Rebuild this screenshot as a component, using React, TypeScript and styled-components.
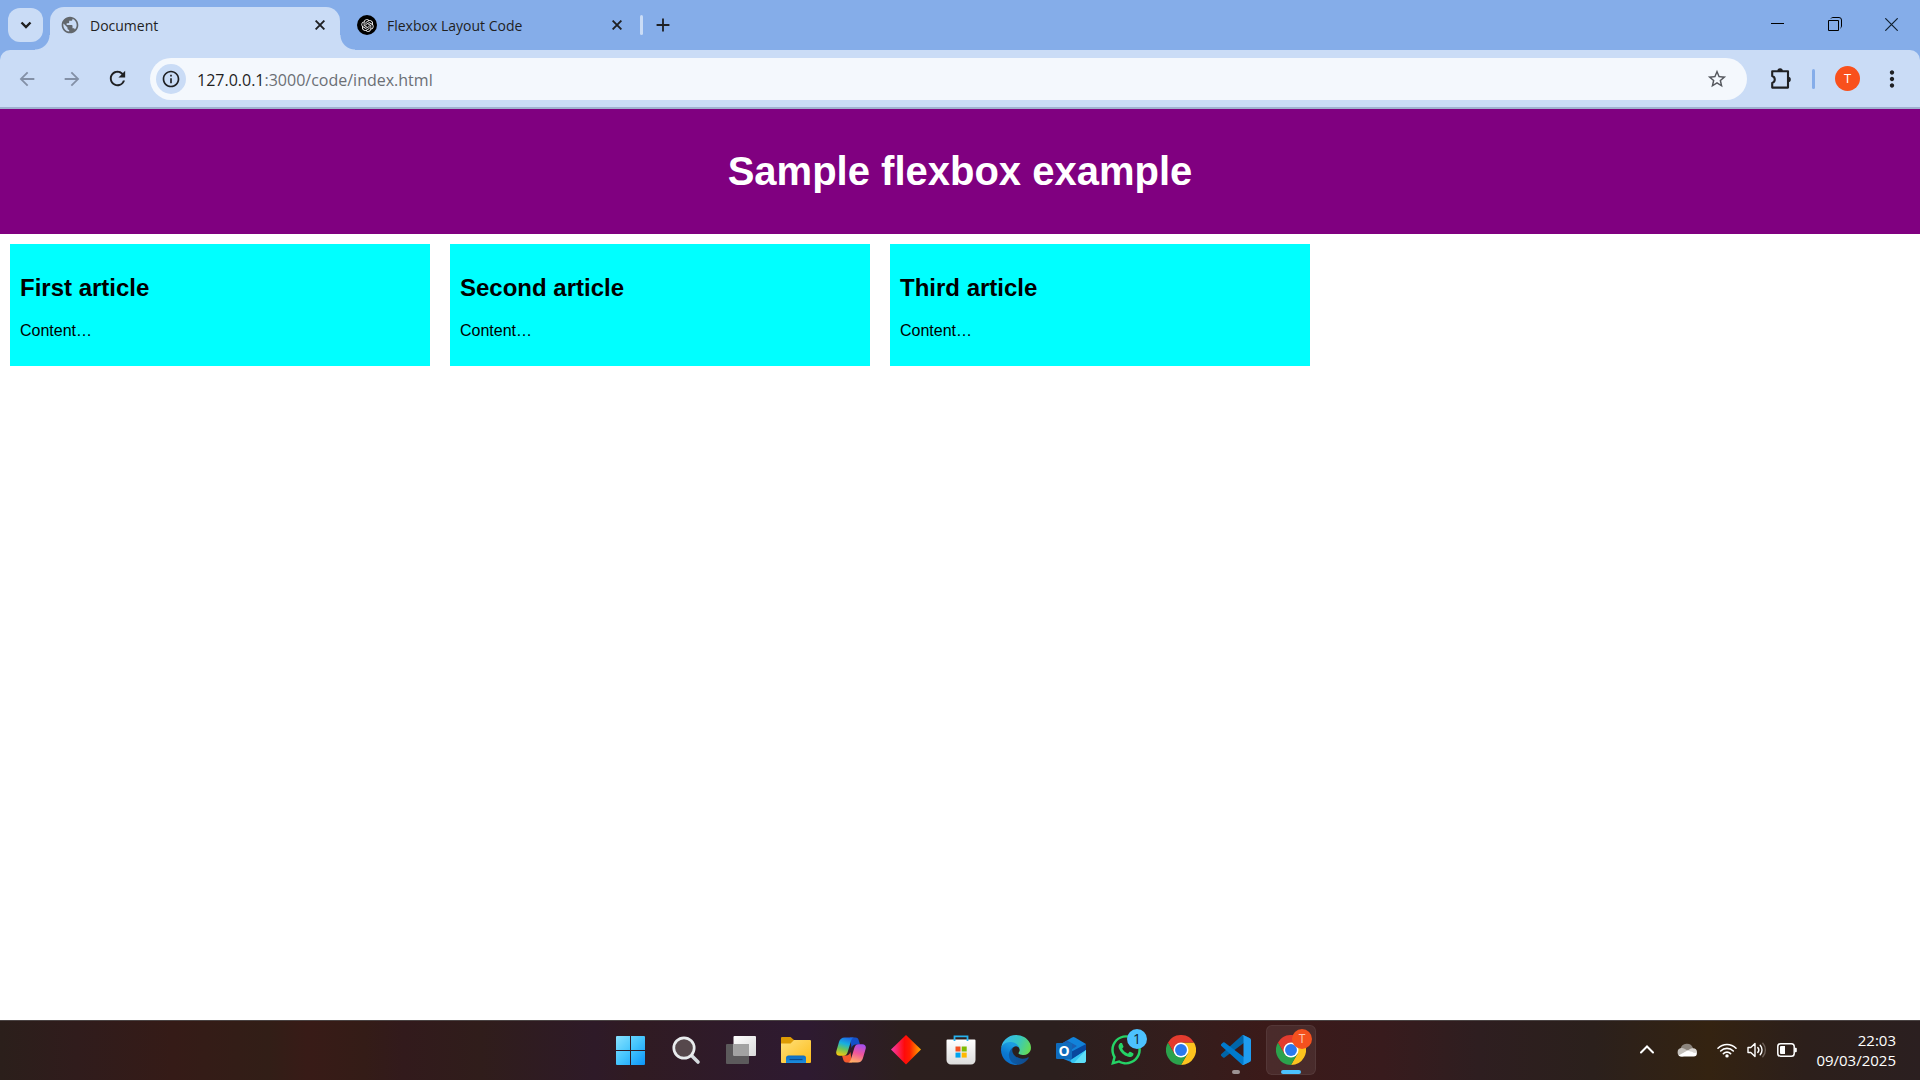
import React from "react";
import styled, { createGlobalStyle, css } from "styled-components";
import { MdArrowBack, MdArrowForward, MdRefresh, MdPublic, MdStarBorder, MdMoreVert, MdInfoOutline, MdAdd } from "react-icons/md";
import { FaWhatsapp } from "react-icons/fa";
import { RiOpenaiFill } from "react-icons/ri";

const UI_FONT = '"Open Sans", "Noto Sans", sans-serif';

const GlobalStyle = createGlobalStyle`
  *, *::before, *::after { box-sizing: border-box; }
  body { margin: 0; background: #fff; font-family: "Liberation Sans", Arial, sans-serif; }
  button, input { font: inherit; color: inherit; border: 0; padding: 0; margin: 0; background: none; }
  svg { display: block; flex: none; }
`;

const Screen = styled.div`
  min-height: 100vh;
  display: flex;
  flex-direction: column;
`;

/* ---------- browser chrome ---------- */

const Browser = styled.header`
  background: #85ade9;
  font-family: ${UI_FONT};
  color: #1f1f1f;
`;

const TabStrip = styled.div`
  display: flex;
  align-items: stretch;
  height: 50px;
  padding-left: 8px;
`;

const TabSearch = styled.button`
  align-self: center;
  display: grid;
  place-items: center;
  width: 35px;
  height: 34px;
  margin-right: 7px;
  border-radius: 12px;
  background: #cadcf6;
`;

const Tab = styled.div<{ $active?: boolean }>`
  position: relative;
  display: flex;
  align-items: center;
  width: ${(p) => (p.$active ? 290 : 300)}px;
  margin-top: 7px;
  padding: ${(p) => (p.$active ? "0 10px 7px" : "0 13px 7px 17px")};
  border-radius: 14px 14px 0 0;
  ${(p) =>
    p.$active &&
    css`
      background: #cadcf6;
      &::before,
      &::after {
        content: "";
        position: absolute;
        bottom: 0;
        width: 15px;
        height: 15px;
      }
      &::before {
        right: 100%;
        background: radial-gradient(circle at 0 0, transparent 14px, #cadcf6 15px);
      }
      &::after {
        left: 100%;
        background: radial-gradient(circle at 100% 0, transparent 14px, #cadcf6 15px);
      }
    `}
`;

const Favicon = styled.span<{ $dark?: boolean }>`
  display: grid;
  place-items: center;
  width: 20px;
  height: 20px;
  border-radius: 50%;
  color: ${(p) => (p.$dark ? "#fff" : "#62676c")};
  background: ${(p) => (p.$dark ? "#000" : "transparent")};
`;

const TabTitle = styled.span`
  flex: 1;
  margin-left: 10px;
  padding-top: 2px;
  font-size: 14px;
  line-height: 20px;
  white-space: nowrap;
`;

const IconButton = styled.button<{ $size?: number; $muted?: boolean }>`
  display: grid;
  place-items: center;
  width: ${(p) => p.$size ?? 20}px;
  height: ${(p) => p.$size ?? 20}px;
  color: ${(p) => (p.$muted ? "#8390a6" : "#1f2023")};
`;

const Divider = styled.span<{ $color: string }>`
  align-self: center;
  width: 3px;
  height: 20px;
  border-radius: 2px;
  background: ${(p) => p.$color};
`;

const NewTab = styled(IconButton)`
  align-self: center;
  margin-left: 5px;
`;

const WindowControls = styled.div`
  display: flex;
  margin-left: auto;
`;

const WindowButton = styled.button`
  display: grid;
  place-items: center;
  width: 57px;
  height: 48px;
`;

const Toolbar = styled.div`
  display: flex;
  align-items: center;
  height: 59px;
  padding: 0 13px 0 9px;
  border-bottom: 2px solid #9fb1cf;
  border-radius: 10px 10px 0 0;
  background: #cadcf6;
`;

const NavButtons = styled.nav`
  display: flex;
  gap: 9px;
  margin-right: 15px;
`;

const Omnibox = styled.div`
  display: flex;
  flex: 1;
  align-items: center;
  height: 42px;
  padding: 0 12px 0 6px;
  border-radius: 21px;
  background: #f4f8fd;
  font-size: 16px;
  line-height: 24px;
`;

const SiteInfo = styled(IconButton)`
  margin-right: 11px;
  border-radius: 50%;
  background: #cadcf6;
`;

const UrlHost = styled.label`
  padding-top: 2px;
`;

const UrlPath = styled.input`
  flex: 1;
  min-width: 0;
  height: 26px;
  padding-top: 2px;
  color: #6b6f75;
  outline: 0;
`;

const ToolbarEnd = styled.div`
  display: flex;
  align-items: center;
  gap: 13px;
  padding-left: 16px;
`;

const Avatar = styled.button`
  width: 25px;
  height: 25px;
  margin: 0 4px 0 7px;
  border-radius: 50%;
  background: #f9501c;
  color: #fff;
  font-size: 13px;
  line-height: 25px;
  text-align: center;
`;

/* ---------- page ---------- */

const Page = styled.main`
  flex: 1;
`;

const Banner = styled.div`
  padding: 40px 10px;
  background: purple;
  color: #fff;
  text-align: center;
`;

const Title = styled.h1`
  margin: 0;
  font-size: 40px;
  line-height: 45px;
`;

const Articles = styled.section`
  display: flex;
  flex-wrap: wrap;
  gap: 20px;
  padding: 10px;
`;

const Article = styled.article`
  width: 420px;
  padding: 30px 10px 26px;
  background: aqua;
`;

const Heading = styled.h2`
  margin: 0 0 20px;
  font-size: 24px;
  line-height: 28px;
`;

const Copy = styled.p`
  margin: 0;
  font-size: 16px;
  line-height: 18px;
`;

/* ---------- taskbar ---------- */

const Taskbar = styled.footer`
  display: grid;
  grid-template-columns: 1fr auto 1fr;
  align-items: center;
  height: 60px;
  padding: 0 0 2px 2px;
  border-top: 1px solid #4a4343;
  background: linear-gradient(
    90deg,
    #2b1f1b 0%, #301c1c 4%, #351b17 9%, #321e17 14%, #381b17 16%, #341c17 19%,
    #321a1c 21%, #301d1b 25%, #2e1a28 31%, #301b22 33%, #2e1a31 42%, #2c1f1e 47%,
    #2b1f1e 55%, #351d1c 62%, #3b1a19 66%, #381b1d 72%, #2e1e20 77%, #2b201c 83%,
    #342311 89%, #2c1f1b 94%, #2b1f20 100%
  );
  color: #fff;
  font-family: ${UI_FONT};
`;

const Apps = styled.nav`
  grid-column: 2;
  display: flex;
  gap: 5px;
`;

const AppButton = styled.button<{ $active?: boolean }>`
  position: relative;
  display: grid;
  place-items: center;
  width: 50px;
  height: 50px;
  border-radius: 6px;
  ${(p) =>
    p.$active &&
    css`
      background: rgba(255, 255, 255, 0.08);
      box-shadow: inset 0 0 0 1px rgba(255, 255, 255, 0.06);
    `}
`;

const Running = styled.span<{ $focused?: boolean }>`
  position: absolute;
  bottom: 1px;
  left: 50%;
  width: ${(p) => (p.$focused ? 20 : 8)}px;
  height: 4px;
  border-radius: 2px;
  background: ${(p) => (p.$focused ? "#4cc2ff" : "#9d9393")};
  transform: translateX(-50%);
`;

const Badge = styled.span<{ $profile?: boolean }>`
  position: absolute;
  top: 4px;
  right: 4px;
  width: 20px;
  height: 20px;
  border-radius: 50%;
  background: ${(p) => (p.$profile ? "#f4511e" : "#4cc2ff")};
  color: ${(p) => (p.$profile ? "#ffc9b5" : "#10242f")};
  font-size: ${(p) => (p.$profile ? 12 : 14)}px;
  line-height: 20px;
  text-align: center;
`;

const Tray = styled.div`
  grid-column: 3;
  justify-self: end;
  display: flex;
  align-items: center;
  padding-right: 24px;
`;

const TrayButton = styled.button`
  display: grid;
  place-items: center;
  width: 40px;
  height: 40px;
`;

const Status = styled.button`
  display: flex;
  align-items: center;
  gap: 10px;
  height: 40px;
  margin: 0 19px 0 10px;
`;

const Clock = styled.time`
  display: grid;
  font-size: 15px;
  line-height: 20px;
  text-align: right;
`;

/* ---------- drawings ---------- */

const CloseIcon = () => (
  <svg width="10" height="10" viewBox="0 0 10 10" stroke="#1f2023" strokeWidth="1.900">
    <path d="M.6.600l8.800 8.800M9.400.6L.6 9.400" />
  </svg>
);

const Puzzle = () => (
  <svg width="22" height="22" viewBox="0 0 22 22" fill="none" stroke="#1f2023" strokeWidth="2.100" strokeLinejoin="round">
    <path d="M2.200 3.200H18v16.400H2.200v-4.700a3.600 3.600 0 0 0 0-6.900z" />
    <path d="M7.400 3a2.700 2.700 0 0 1 5.400 0zM18.200 8.800a2.600 2.600 0 0 1 0 5.200z" fill="#1f2023" stroke="none" />
  </svg>
);

const Windows = () => (
  <svg width="30" height="30" viewBox="0 0 30 30">
    <defs>
      <linearGradient id="win" gradientUnits="userSpaceOnUse" x1="0" y1="0" x2="30" y2="30">
        <stop offset="0" stopColor="#8be3ff" />
        <stop offset=".5" stopColor="#44c5fd" />
        <stop offset="1" stopColor="#0a94f8" />
      </linearGradient>
    </defs>
    <path fill="url(#win)" d="M1 1h13v14H0V2a1 1 0 0 1 1-1zM15 1h13a1 1 0 0 1 1 1v13H15zM0 16h14v14H1a1 1 0 0 1-1-1zM15 16h14v13a1 1 0 0 1-1 1H15z" />
  </svg>
);

const Search = () => (
  <svg width="30" height="30" viewBox="0 0 30 30" fill="none">
    <path d="M20.500 20.500l6.500 6.500" stroke="#d5dade" strokeWidth="3.600" strokeLinecap="round" />
    <circle cx="13" cy="13" r="10.200" fill="#56484c" stroke="#e9ecee" strokeWidth="2.700" />
  </svg>
);

const TaskView = () => (
  <svg width="30" height="30" viewBox="0 0 30 30">
    <defs>
      <linearGradient id="tv" x1="0" y1="0" x2="1" y2="1">
        <stop offset="0" stopColor="#fff" />
        <stop offset="1" stopColor="#d9d9d9" />
      </linearGradient>
    </defs>
    <rect x="0" y="9" width="23" height="20" rx="1" fill="#5c5a5c" />
    <rect x="7.500" y="1" width="22.500" height="20" rx="1" fill="url(#tv)" />
    <path d="M7.500 9H23v12H8.500a1 1 0 0 1-1-1z" fill="#a2a2a2" />
  </svg>
);

const Folder = () => (
  <svg width="30" height="30" viewBox="0 0 30 30">
    <defs>
      <linearGradient id="fo" x1="0" y1="0" x2="1" y2="1">
        <stop offset="0" stopColor="#ffe07a" />
        <stop offset="1" stopColor="#fcbc19" />
      </linearGradient>
      <linearGradient id="fb" x1="0" y1="0" x2="0" y2="1">
        <stop offset="0" stopColor="#0f6cc0" />
        <stop offset="1" stopColor="#1a8de0" />
      </linearGradient>
    </defs>
    <path d="M0 3a1 1 0 0 1 1-1h8.500l3.500 3v6H0z" fill="#dd9b05" />
    <path d="M0 8.500h9.500L13 5h16a1 1 0 0 1 1 1v21a1 1 0 0 1-1 1H1a1 1 0 0 1-1-1z" fill="url(#fo)" />
    <path d="M5 28v-5a2.500 2.500 0 0 1 2.500-2.500h15A2.500 2.500 0 0 1 25 23v5z" fill="url(#fb)" />
    <path d="M8.500 24.500h13" stroke="#0a4a8c" strokeWidth="1.200" />
  </svg>
);

const Copilot = () => (
  <svg width="30" height="30" viewBox="0 0 30 30">
    <defs>
      <linearGradient id="co1" x1=".6" y1="0" x2=".3" y2="1">
        <stop offset="0" stopColor="#1d6be8" />
        <stop offset=".35" stopColor="#17b0e0" />
        <stop offset=".65" stopColor="#6cc45a" />
        <stop offset="1" stopColor="#f5c80e" />
      </linearGradient>
      <linearGradient id="co2" x1=".7" y1="0" x2=".4" y2="1">
        <stop offset="0" stopColor="#a44ff0" />
        <stop offset=".5" stopColor="#f0569a" />
        <stop offset="1" stopColor="#ffb066" />
      </linearGradient>
    </defs>
    <path d="M14 2.500h5.500c2 0 2.800 1.200 3.400 3.200L24 9.500h-4c-2.500 0-3.700 1.300-4.400 3.500z" fill="#1450c8" />
    <path d="M16 27.500h-5.500c-2 0-2.800-1.200-3.400-3.200L6 20.500h4c2.500 0 3.700-1.300 4.400-3.500z" fill="#f4592e" />
    <path d="M8.500 2.500h10c-2 0-2.900 1.600-3.500 3.600l-3.300 11c-.7 2.300-1.900 3.700-4.200 3.700H3.600C.8 20.800-.4 18.700.4 15.900L3 7c.9-3 2.800-4.500 5.500-4.500z" fill="url(#co1)" />
    <path d="M21.500 27.500h-10c2 0 2.900-1.600 3.500-3.600l3.300-11c.7-2.300 1.900-3.700 4.200-3.700h3.900c2.800 0 4 2.100 3.200 4.900L27 23c-.9 3-2.800 4.500-5.500 4.500z" fill="url(#co2)" />
  </svg>
);

const Diamond = () => (
  <svg width="30" height="30" viewBox="0 0 30 30">
    <defs>
      <linearGradient id="di">
        <stop offset="0" stopColor="#f43cb0" />
        <stop offset=".45" stopColor="#ff0a0a" />
        <stop offset=".62" stopColor="#ff1d00" />
        <stop offset="1" stopColor="#ffae00" />
      </linearGradient>
    </defs>
    <path d="M15 0l15 14.500L15 29.500 0 14.500z" fill="url(#di)" />
  </svg>
);

const Store = () => (
  <svg width="30" height="30" viewBox="0 0 30 30">
    <defs>
      <linearGradient id="st" x1="0" y1="0" x2="0" y2="1">
        <stop offset="0" stopColor="#fff" />
        <stop offset="1" stopColor="#dcdcdc" />
      </linearGradient>
    </defs>
    <path d="M.5 5.500A1 1 0 0 1 1.500 4.500h27a1 1 0 0 1 1 1V25a4.500 4.500 0 0 1-4.500 4.500H5A4.500 4.500 0 0 1 .5 25z" fill="url(#st)" />
    <path d="M8.500 6V1.300h13V6" fill="none" stroke="#27b2ee" strokeWidth="1.800" />
    <path d="M9.500 11.500h5v5h-5z" fill="#f25022" />
    <path d="M15.700 11.500h5v5h-5z" fill="#7fba00" />
    <path d="M9.500 17.600h5v5h-5z" fill="#00a4ef" />
    <path d="M15.700 17.600h5v5h-5z" fill="#ffb900" />
  </svg>
);

const Edge = () => (
  <svg width="30" height="30" viewBox="0 0 256 256">
    <defs>
      <linearGradient id="ed1" x1=".25" y1=".7" x2="1" y2=".7">
        <stop offset="0" stopColor="#0c59a4" />
        <stop offset="1" stopColor="#114a8b" />
      </linearGradient>
      <linearGradient id="ed2" x1=".6" y1=".2" x2=".3" y2="1">
        <stop offset="0" stopColor="#1b9de2" />
        <stop offset=".5" stopColor="#0b78d0" />
        <stop offset="1" stopColor="#0a6cc8" />
      </linearGradient>
      <linearGradient id="ed3" x1="0" y1=".4" x2="1" y2=".7">
        <stop offset="0" stopColor="#35b8ef" />
        <stop offset=".5" stopColor="#36c7c4" />
        <stop offset="1" stopColor="#68dc4e" />
      </linearGradient>
    </defs>
    <path fill="url(#ed1)" d="M231 190.500c-3.400 1.800-6.900 3.400-10.500 4.700a101.900 101.900 0 0 1-35.900 6.500c-47.300 0-88.500-32.500-88.500-74.300 0-11.400 6.400-21.900 16.600-27.500-42.800 1.800-53.800 46.400-53.800 72.500 0 73.900 68.100 81.400 82.800 81.400 7.900 0 19.800-2.300 27-4.600l1.300-.4a128.300 128.300 0 0 0 66.600-52.800 4 4 0 0 0-5.600-5.500z" />
    <path fill="url(#ed2)" d="M105.700 241.400A79.200 79.200 0 0 1 83 220.100a80.700 80.700 0 0 1 29.500-120.200c3.200-1.500 8.500-4.100 15.600-4a32.400 32.400 0 0 1 25.700 13 31.900 31.900 0 0 1 6.300 18.700c0-.2 24.500-79.600-80-79.600-43.900 0-80 41.700-80 78.200a130.200 130.200 0 0 0 12.100 56 128 128 0 0 0 156.400 67.100 75.500 75.500 0 0 1-62.800-8z" />
    <path fill="url(#ed3)" d="M152.300 148.900c-.9 1-3.400 2.500-3.400 5.600 0 2.600 1.700 5.200 4.800 7.300 14.300 10 41.400 8.600 41.500 8.600a59.600 59.600 0 0 0 30.300-8.300 61.400 61.400 0 0 0 30.400-52.900c.3-22.400-8-37.300-11.300-43.900C223.500 23.900 177.700 0 128 0A128 128 0 0 0 0 126.200c.5-36.500 36.800-66 80-66 3.500 0 23.500.3 42 10.100 16.300 8.600 24.900 18.900 30.800 29.200 6.200 10.700 7.300 24.100 7.300 29.500 0 5.300-2.700 13.300-7.800 19.900z" />
  </svg>
);

const OutlookMark = styled.span`
  position: absolute;
  left: 10px;
  top: 18px;
  width: 16px;
  height: 16px;
  border-radius: 1px;
  background: #0f6cbd;
  color: #fff;
  font-size: 14px;
  font-weight: 700;
  line-height: 15px;
  text-align: center;
`;

const Outlook = () => (
  <>
    <svg width="30" height="30" viewBox="0 0 30 30">
      <path d="M5 9L16 2.400a3 3 0 0 1 3 0L30 9v16a3 3 0 0 1-3 3H17a3 3 0 0 1-2-1L5 23z" fill="#1283da" />
      <path d="M5 9l6-3.600 10 5.600-13 8.500z" fill="#1a5fb4" />
      <path d="M30 9v6L15.500 25 11 22V19z" fill="#08479d" />
      <path d="M30 15v10a3 3 0 0 1-3 3H17.500a3 3 0 0 1-3-3z" fill="#35c5f2" />
      <path d="M30 15v10a3 3 0 0 1-3 3h-9z" fill="#5fdff8" />
    </svg>
    <OutlookMark>O</OutlookMark>
  </>
);

const Chrome = () => (
  <svg width="30" height="30" viewBox="0 0 48 48">
    <path d="M24 12h20.800A24 24 0 0 1 24 48l10.400-18z" fill="#fcc31e" />
    <path d="M13.600 30L3.200 12A24 24 0 0 0 24 48l10.400-18z" fill="#2ba24c" />
    <path d="M24 12h20.800A24 24 0 0 0 3.200 12l10.400 18z" fill="#e33b2e" />
    <circle cx="24" cy="24" r="12" fill="#fff" />
    <circle cx="24" cy="24" r="9.500" fill="#2a79ee" />
  </svg>
);

const VsCode = () => (
  <svg width="30" height="30" viewBox="0 0 100 100">
    <path d="M96.500 10.800L75.900.9a6.200 6.200 0 0 0-7.100 1.200L1.300 63.600a4.200 4.200 0 0 0 0 6.200l5.500 5a4.200 4.200 0 0 0 5.300.2l81.200-61.600c2.700-2.100 6.700-.1 6.700 3.300v-.2a6.200 6.200 0 0 0-3.500-5.700z" fill="#0065a9" />
    <path d="M96.500 89.200l-20.600 9.900a6.200 6.200 0 0 1-7.100-1.200L1.300 36.400a4.200 4.200 0 0 1 0-6.200l5.500-5a4.200 4.200 0 0 1 5.300-.2l81.200 61.600c2.700 2.100 6.700.1 6.700-3.300v.2a6.200 6.200 0 0 1-3.500 5.700z" fill="#007acc" />
    <path d="M75.900 99.100a6.200 6.200 0 0 1-7.100-1.200c2.300 2.300 6.200.7 6.200-2.600V4.700c0-3.300-3.900-4.900-6.200-2.600a6.200 6.200 0 0 1 7.100-1.200l20.600 9.900a6.300 6.300 0 0 1 3.500 5.700v67a6.300 6.300 0 0 1-3.500 5.600z" fill="#1f9cf0" />
  </svg>
);

const Cloud = () => (
  <svg width="20" height="14" viewBox="0 0 20 14">
    <path d="M3.500 6a6.500 6.500 0 0 1 12.500-1l1 4H4z" fill="#8b847c" />
    <path d="M4.200 13.500A4.300 4.300 0 0 1 4.300 5c2.200-.2 3.500.8 6.200 2.400L13 9l-7 4.500z" fill="#c4c0bb" />
    <path d="M10 8l3-2a4.200 4.200 0 0 1 3-.8 4.200 4.200 0 0 1 4 4.300v1z" fill="#d9d6d2" />
    <path d="M1.500 12.500L10.500 7.500l9.400 2.800a3.300 3.300 0 0 1-3.400 3.200H4.200a4 4 0 0 1-2.700-1z" fill="#fff" />
  </svg>
);

const Wifi = () => (
  <svg width="20" height="16" viewBox="0 0 20 16" fill="none" stroke="#fff" strokeWidth="1.600" strokeLinecap="round">
    <path d="M1 6.200a12.700 12.700 0 0 1 18 0M3.700 9a8.900 8.900 0 0 1 12.600 0M6.400 11.600a5.100 5.100 0 0 1 7.200 0" />
    <circle cx="10" cy="13.900" r="1.700" fill="#fff" stroke="none" />
  </svg>
);

const Speaker = () => (
  <svg width="20" height="16" viewBox="0 0 20 16" fill="none" stroke="#fff" strokeWidth="1.400" strokeLinecap="round" strokeLinejoin="round">
    <path d="M1 5.500h2.800L8 1.500v13l-4.200-4H1z" />
    <path d="M10.800 5.500a3.800 3.800 0 0 1 0 5M13.200 3.300a7 7 0 0 1 0 9.400" />
    <path d="M15.800 1.300a10 10 0 0 1 0 13.400" stroke="#6d6058" />
  </svg>
);

const Battery = () => (
  <svg width="20" height="14" viewBox="0 0 20 14" fill="none">
    <rect x=".8" y=".8" width="16.400" height="12.400" rx="2.800" stroke="#fff" strokeWidth="1.500" />
    <path d="M3 4a1 1 0 0 1 1-1h4v8H4a1 1 0 0 1-1-1z" fill="#fff" />
    <path d="M18 4.800h.8a1 1 0 0 1 1 1v2.400a1 1 0 0 1-1 1H18z" fill="#fff" />
  </svg>
);

const articles = ["First article", "Second article", "Third article"];

const apps = [
  { name: "Start", icon: <Windows /> },
  { name: "Search", icon: <Search /> },
  { name: "Task View", icon: <TaskView /> },
  { name: "File Explorer", icon: <Folder /> },
  { name: "Copilot", icon: <Copilot /> },
  { name: "Diamond", icon: <Diamond /> },
  { name: "Microsoft Store", icon: <Store /> },
  { name: "Edge", icon: <Edge /> },
  { name: "Outlook", icon: <Outlook /> },
  { name: "WhatsApp", icon: <FaWhatsapp size={34} color="#25d366" />, badge: "1" },
  { name: "Chrome", icon: <Chrome /> },
  { name: "Visual Studio Code", icon: <VsCode />, running: true },
  { name: "Chrome, profile T", icon: <Chrome />, badge: "T", running: true, active: true },
];

export default function App() {
  return (
    <Screen>
      <GlobalStyle />
      <Browser>
        <TabStrip>
          <TabSearch aria-label="Search tabs">
            <svg width="12" height="8" viewBox="0 0 12 8" fill="none" stroke="#1f1f1f" strokeWidth="2.400">
              <path d="M1.500 1.500L6 6l4.500-4.500" />
            </svg>
          </TabSearch>
          <Tab $active>
            <Favicon><MdPublic size={20} /></Favicon>
            <TabTitle>Document</TabTitle>
            <IconButton aria-label="Close Document"><CloseIcon /></IconButton>
          </Tab>
          <Tab>
            <Favicon $dark><RiOpenaiFill size={15} /></Favicon>
            <TabTitle>Flexbox Layout Code</TabTitle>
            <IconButton aria-label="Close Flexbox Layout Code"><CloseIcon /></IconButton>
          </Tab>
          <Divider $color="#cadcf6" />
          <NewTab $size={30} aria-label="New tab"><MdAdd size={22} /></NewTab>
          <WindowControls>
            <WindowButton aria-label="Minimize">
              <svg width="13" height="13" viewBox="0 0 13 13" stroke="#000"><path d="M0 5.500h13" /></svg>
            </WindowButton>
            <WindowButton aria-label="Restore">
              <svg width="14" height="14" viewBox="0 0 14 14" fill="none" stroke="#000">
                <path d="M.5 3.500h10v10H.5zM3 1.500C3.300.8 4 .5 4.800.5H11A2.500 2.500 0 0 1 13.500 3v6.200c0 .8-.3 1.500-1 1.800" />
              </svg>
            </WindowButton>
            <WindowButton aria-label="Close">
              <svg width="13" height="13" viewBox="0 0 13 13" stroke="#10202f" strokeWidth="1.200"><path d="M.3.300l12.400 12.400M12.700.3L.3 12.700" /></svg>
            </WindowButton>
          </WindowControls>
        </TabStrip>
        <Toolbar>
          <NavButtons>
            <IconButton $size={36} $muted aria-label="Back"><MdArrowBack size={22} /></IconButton>
            <IconButton $size={36} $muted aria-label="Forward"><MdArrowForward size={22} /></IconButton>
            <IconButton $size={36} aria-label="Reload"><MdRefresh size={23} /></IconButton>
          </NavButtons>
          <Omnibox>
            <SiteInfo $size={30} aria-label="Site information"><MdInfoOutline size={20} /></SiteInfo>
            <UrlHost htmlFor="url">127.0.0.1</UrlHost>
            <UrlPath id="url" defaultValue=":3000/code/index.html" />
            <IconButton $size={36} aria-label="Bookmark"><MdStarBorder size={22} color="#55585e" /></IconButton>
          </Omnibox>
          <ToolbarEnd>
            <IconButton $size={36} aria-label="Extensions"><Puzzle /></IconButton>
            <Divider $color="#85ade9" />
            <Avatar>T</Avatar>
            <IconButton $size={30} aria-label="Menu"><MdMoreVert size={26} /></IconButton>
          </ToolbarEnd>
        </Toolbar>
      </Browser>

      <Page>
        <Banner><Title>Sample flexbox example</Title></Banner>
        <Articles>
          {articles.map((title) => (
            <Article key={title}>
              <Heading>{title}</Heading>
              <Copy>Content…</Copy>
            </Article>
          ))}
        </Articles>
      </Page>

      <Taskbar>
        <Apps>
          {apps.map((app) => (
            <AppButton key={app.name} aria-label={app.name} $active={app.active}>
              {app.icon}
              {app.badge && <Badge $profile={app.active}>{app.badge}</Badge>}
              {app.running && <Running $focused={app.active} />}
            </AppButton>
          ))}
        </Apps>
        <Tray>
          <TrayButton aria-label="Hidden icons">
            <svg width="14" height="9" viewBox="0 0 14 9" fill="none" stroke="#fff" strokeWidth="2" strokeLinecap="round"><path d="M1 7.500l6-6 6 6" /></svg>
          </TrayButton>
          <TrayButton aria-label="OneDrive"><Cloud /></TrayButton>
          <Status aria-label="Network, volume and battery"><Wifi /><Speaker /><Battery /></Status>
          <Clock dateTime="2025-03-09T22:03"><span>22:03</span><span>09/03/2025</span></Clock>
        </Tray>
      </Taskbar>
    </Screen>
  );
}
